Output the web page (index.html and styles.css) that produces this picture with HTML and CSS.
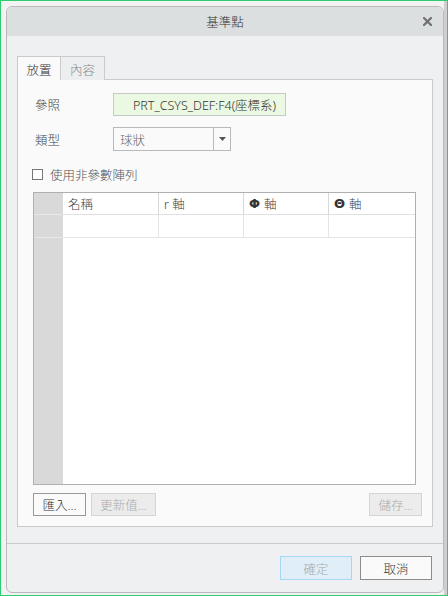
FILE: index.html
```html
<!DOCTYPE html>
<html lang="zh-Hant">
<head>
<meta charset="utf-8">
<title>基準點</title>
<link rel="stylesheet" href="styles.css">
</head>
<body>
<div class="frame">
  <div class="dialog">
    <div class="titlebar">
      <span class="title">基準點</span>
      <span class="close" aria-label="關閉">
        <svg width="9" height="9" viewBox="0 0 9 9"><path d="M1 1L8 8M8 1L1 8" stroke="#707070" stroke-width="2.2" stroke-linecap="square"/></svg>
      </span>
    </div>
    <div class="body">
      <div class="tabs">
        <div class="tab active">放置</div>
        <div class="tab">內容</div>
      </div>
      <div class="panel">
        <div class="row">
          <span class="label">參照</span>
          <div class="ref-field">PRT_CSYS_DEF:F4(座標系)</div>
        </div>
        <div class="row row-type">
          <span class="label">類型</span>
          <div class="combo">
            <span class="combo-text">球狀</span>
            <span class="combo-arrow"><svg width="7" height="4" viewBox="0 0 7 4"><path d="M0 0H7L3.5 4Z" fill="#555"/></svg></span>
          </div>
        </div>
        <label class="check-row">
          <span class="checkbox"></span>
          <span class="check-text">使用非參數陣列</span>
        </label>
        <div class="table">
          <div class="trow thead">
            <div class="rh"></div>
            <div class="cell">名稱</div>
            <div class="cell">r 軸</div>
            <div class="cell"><b class="sym">Φ</b> 軸</div>
            <div class="cell last"><b class="sym">Θ</b> 軸</div>
          </div>
          <div class="trow tdata">
            <div class="rh"></div>
            <div class="cell"></div>
            <div class="cell"></div>
            <div class="cell"></div>
            <div class="cell last"></div>
          </div>
          <div class="tfill">
            <div class="rh"></div>
            <div class="fill-space"></div>
          </div>
        </div>
        <div class="btn-row">
          <button class="btn">匯入...</button>
          <button class="btn disabled">更新值...</button>
          <span class="spacer"></span>
          <button class="btn disabled">儲存...</button>
        </div>
      </div>
    </div>
    <div class="footer">
      <button class="btn big primary-disabled">確定</button>
      <button class="btn big">取消</button>
    </div>
  </div>
</div>
</body>
</html>
```

FILE: styles.css
```css
* { box-sizing: border-box; }
html, body { margin: 0; padding: 0; }
body {
  font-family: "Noto Sans", "Noto Sans CJK TC", sans-serif;
  font-size: 12px;
  font-weight: 300;
  color: #333;
}
.frame {
  width: 448px;
  height: 596px;
  border: 1px solid #2ecc71;
  background: linear-gradient(90deg, #f3f3f3 0, #f3f3f3 443px, #cfcfcf 443px);
  padding: 5px 3px 2px 5px;
  display: flex;
}
.dialog {
  flex: 1;
  border: 1px solid #b8bbbc;
  border-radius: 6px;
  overflow: hidden;
  background: #eef0f1;
  display: flex;
  flex-direction: column;
}
.titlebar {
  height: 29px;
  background: #dcdfe0;
  display: flex;
  align-items: center;
  justify-content: center;
  position: relative;
}
.title {
  font-size: 12.5px;
  color: #333;
}
.close {
  position: absolute;
  right: 11px;
  top: 10px;
  display: flex;
}
.body {
  flex: 1;
  padding: 20px 10px 16px 10px;
  display: flex;
  flex-direction: column;
}
.tabs {
  display: flex;
  height: 24px;
  margin-bottom: -1px;
  position: relative;
  z-index: 1;
}
.tab {
  width: 44px;
  height: 24px;
  border: 1px solid #c9cbcc;
  border-bottom: none;
  background: #eceeef;
  color: #8a8a8a;
  font-size: 12.5px;
  display: flex;
  align-items: center;
  justify-content: center;
  padding-top: 1px;
}
.tab + .tab { border-left: none; }
.tab.active {
  background: #fafafa;
  color: #333;
}
.panel {
  flex: 1;
  border: 1px solid #c9cbcc;
  background: #fafafa;
  padding: 13px 16px 10px 15px;
  display: flex;
  flex-direction: column;
}
.row {
  display: flex;
  align-items: center;
}
.row-type { margin-top: 11px; }
.label {
  width: 80px;
  padding-left: 2px;
  color: #444;
  font-size: 12.5px;
}
.ref-field {
  width: 173px;
  height: 23px;
  background: #ebf8e2;
  border: 1px solid #c6c9c5;
  display: flex;
  align-items: center;
  justify-content: center;
  padding-left: 10px;
  color: #333;
  font-size: 12.5px;
}
.combo {
  width: 118px;
  height: 24px;
  border: 1px solid #b7b9ba;
  background: #fafafa;
  display: flex;
  align-items: center;
}
.combo-text {
  flex: 1;
  padding-left: 6px;
  color: #666;
  font-size: 12.5px;
}
.combo-arrow {
  width: 17px;
  height: 100%;
  border-left: 1px solid #b7b9ba;
  display: flex;
  align-items: center;
  justify-content: center;
}
.check-row {
  display: flex;
  align-items: center;
  margin-top: 15px;
  margin-left: -1px;
  height: 17px;
}
.checkbox {
  width: 11px;
  height: 11px;
  border: 1px solid #777;
  background: #fff;
}
.check-text {
  margin-left: 7px;
  color: #555;
  font-size: 12.5px;
}
.table {
  margin-top: 9px;
  flex: 1;
  border: 1px solid #b0b0b0;
  background: #fff;
  display: flex;
  flex-direction: column;
}
.trow {
  display: grid;
  grid-template-columns: 29px 96px 85px 85px 1fr;
  height: 22px;
}
.tdata { height: 23px; }
.rh {
  background: #d9d9d9;
  border-bottom: 1px solid #e8e8e8;
}
.cell {
  border-right: 1px solid #e4e4e4;
  border-bottom: 1px solid #e4e4e4;
  display: flex;
  align-items: center;
  padding-left: 5px;
  font-size: 12.5px;
  color: #444;
}
.thead .cell { border-right-color: #d8d8d8; border-bottom-color: #e0e0e0; }
.cell.last { border-right: none; }
.sym {
  font-weight: bold;
  font-family: "DejaVu Sans", sans-serif;
  font-size: 13px;
  color: #333;
  margin-right: 4px;
}
.tfill {
  flex: 1;
  display: grid;
  grid-template-columns: 29px 1fr;
}
.tfill .rh { border-bottom: none; }
.btn-row {
  display: flex;
  margin-top: 8px;
  gap: 5px;
}
.spacer { flex: 1; }
.btn {
  height: 23px;
  padding: 0 7px;
  border: 1px solid #999;
  background: #fafafa;
  font-family: inherit;
  font-weight: 300;
  font-size: 12.5px;
  color: #333;
  display: flex;
  align-items: center;
  justify-content: center;
}
.btn-row .btn:first-child { width: 53px; }
.btn-row .btn:nth-child(2) { width: 65px; }
.btn-row .btn:last-child { width: 53px; margin-right: -6px; }
.btn.disabled {
  background: #ececec;
  border-color: #d5d5d5;
  color: #aaa;
}
.footer {
  height: 49px;
  border-top: 1px solid #c9cbcc;
  display: flex;
  justify-content: flex-end;
  align-items: flex-start;
  padding: 12px 11px 0 0;
  gap: 8px;
}
.btn.big {
  width: 72px;
  height: 24px;
  border-color: #8d8d8d;
}
.btn.big.primary-disabled {
  background: #dfeef8;
  border-color: #a6d7f3;
  color: #aaa;
}
```
